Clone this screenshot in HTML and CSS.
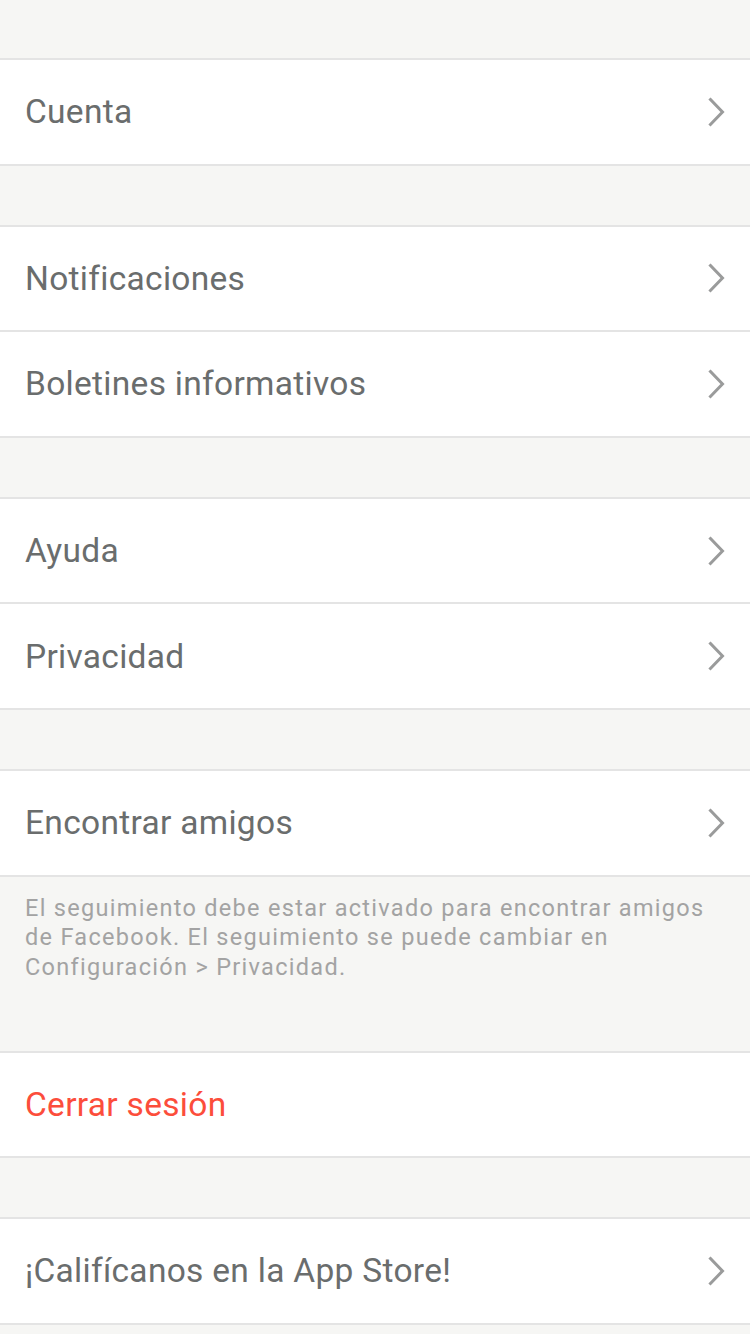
FILE: index.html
```html
<!DOCTYPE html>
<html lang="es">
<head>
<meta charset="utf-8">
<title>Configuración</title>
<link rel="stylesheet" href="styles.css">
</head>
<body>
<div class="page">
  <section class="group">
    <div class="row"><span class="label">Cuenta</span><svg class="chev" viewBox="0 0 18 30"><path d="M2.5 2.5 L14.5 15 L2.5 27.5"/></svg></div>
  </section>
  <section class="group">
    <div class="row"><span class="label">Notificaciones</span><svg class="chev" viewBox="0 0 18 30"><path d="M2.5 2.5 L14.5 15 L2.5 27.5"/></svg></div>
    <div class="row"><span class="label">Boletines informativos</span><svg class="chev" viewBox="0 0 18 30"><path d="M2.5 2.5 L14.5 15 L2.5 27.5"/></svg></div>
  </section>
  <section class="group">
    <div class="row"><span class="label">Ayuda</span><svg class="chev" viewBox="0 0 18 30"><path d="M2.5 2.5 L14.5 15 L2.5 27.5"/></svg></div>
    <div class="row"><span class="label">Privacidad</span><svg class="chev" viewBox="0 0 18 30"><path d="M2.5 2.5 L14.5 15 L2.5 27.5"/></svg></div>
  </section>
  <section class="group group-noted">
    <div class="row"><span class="label">Encontrar amigos</span><svg class="chev" viewBox="0 0 18 30"><path d="M2.5 2.5 L14.5 15 L2.5 27.5"/></svg></div>
  </section>
  <p class="note">El seguimiento debe estar activado para encontrar amigos de Facebook. El seguimiento se puede cambiar en Configuración &gt; Privacidad.</p>
  <section class="group">
    <div class="row"><span class="label label-danger">Cerrar sesión</span></div>
  </section>
  <section class="group">
    <div class="row"><span class="label">¡Califícanos en la App Store!</span><svg class="chev" viewBox="0 0 18 30"><path d="M2.5 2.5 L14.5 15 L2.5 27.5"/></svg></div>
  </section>
</div>
</body>
</html>
```

FILE: styles.css
```css
html, body {
  margin: 0;
  padding: 0;
  background: #f6f6f4;
}
body {
  font-family: Roboto, "Liberation Sans", sans-serif;
  -webkit-font-smoothing: antialiased;
}
.page {
  width: 750px;
  min-height: 1334px;
  padding-top: 58px;
  box-sizing: border-box;
  display: flex;
  flex-direction: column;
}
.group {
  background: #fff;
  border-top: 2px solid #e4e4e4;
  border-bottom: 2px solid #e4e4e4;
  margin-bottom: 59px;
}
.group-noted {
  margin-bottom: 0;
}
.row {
  height: 103.6px;
  display: flex;
  align-items: center;
  justify-content: space-between;
  padding: 0 25px;
}
.row + .row {
  border-top: 2px solid #e4e4e4;
}
.label {
  font-size: 33.5px;
  color: #6a6d6d;
  letter-spacing: 0.3px;
}
.label-danger {
  color: #fc4d3b;
}
.chev {
  width: 18px;
  height: 30px;
  margin-right: -1px;
  fill: none;
  stroke: #9a9b9b;
  stroke-width: 3;
  stroke-linecap: square;
}
.note {
  margin: 0;
  padding: 17px 25px 0;
  height: 174px;
  box-sizing: border-box;
  font-size: 23.5px;
  line-height: 29.5px;
  letter-spacing: 1.3px;
  color: #a3a3a3;
}
```
